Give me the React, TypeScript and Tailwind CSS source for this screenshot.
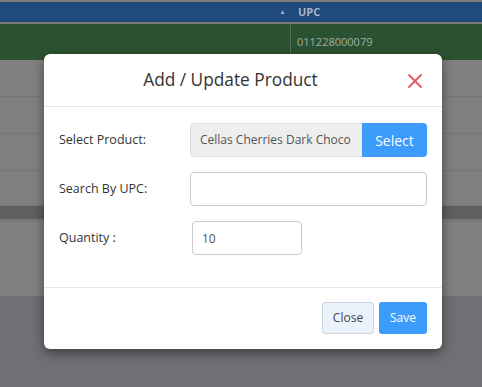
import React from "react";

const ROWS = [37, 37, 37, 35];

export default function App() {
  return (
    <div className="relative w-[482px] h-[387px] overflow-hidden bg-[#6f7074] font-['Open_Sans',sans-serif]">
      {/* table behind the backdrop */}
      <div className="h-[2px] bg-[#7d7d7d]" />
      <div className="flex h-[20px] bg-[#1e4a7c] text-[11px] font-bold text-[#a9b6c6]">
        <div className="flex w-[291px] items-center justify-end pr-[5px]">
          <span className="text-[7px] text-[#9aa8b8]">▲</span>
        </div>
        <div className="flex items-center pl-[7px]">UPC</div>
      </div>
      <div className="h-[2px] bg-[#7a7a7a]" />
      <div className="flex h-[36px] bg-[#2b5230] text-[11px] text-[#a3ada3]">
        <div className="w-[291px] border-r border-[#566f58]" />
        <div className="flex items-center pl-[6px]">011228000079</div>
      </div>
      <div className="bg-[#808080]">
        {ROWS.map((h, i) => (
          <div key={i} style={{ height: h }} className="border-b border-[#767676]" />
        ))}
      </div>
      <div className="h-[13px] bg-[#606060]" />
      <div className="h-[3px] bg-[#7a7a7a]" />
      <div className="h-[74px] bg-[#808080]" />

      {/* modal */}
      <div className="absolute left-[44px] top-[54px] flex w-[398px] h-[295px] flex-col rounded-[6px] bg-white shadow-[0_4px_12px_rgba(0,0,0,0.45)]">
        <div className="relative flex h-[53px] items-center justify-center border-b border-[#e5e5e5] pr-[25px]">
          <h4 className="text-[17.3px] text-[#333]">Add / Update Product</h4>
          <svg className="absolute right-[20px] top-[20px]" width="14" height="14" viewBox="0 0 14 14">
            <path d="M1 1 L13 13 M13 1 L1 13" stroke="#e0595c" strokeWidth="1.8" strokeLinecap="round" />
          </svg>
        </div>

        <div className="flex flex-1 flex-col gap-[15px] border-b border-[#e5e5e5] px-[15px] pt-[16px] text-[12.5px] text-[#333]">
          <div className="flex h-[34px] items-center">
            <label className="w-[131px]">Select Product:</label>
            <div className="flex h-[34px] flex-1 overflow-hidden rounded-[4px]">
              <div className="flex flex-1 items-center whitespace-nowrap rounded-l-[4px] border border-r-0 border-[#ddd] bg-[#eeeeee] pl-[9px] text-[12px] text-[#555]">
                Cellas Cherries Dark Choco
              </div>
              <button className="flex w-[65px] items-center justify-center bg-[#3c9cfc] text-[14px] text-white">
                Select
              </button>
            </div>
          </div>
          <div className="flex h-[34px] items-center">
            <label className="w-[131px]">Search By UPC:</label>
            <input className="h-[34px] flex-1 rounded-[4px] border border-[#ccc] bg-white px-[10px] outline-none" />
          </div>
          <div className="flex h-[34px] items-center">
            <label className="w-[133px]">Quantity :</label>
            <input
              defaultValue="10"
              className="h-[34px] w-[110px] rounded-[4px] border border-[#ccc] bg-white px-[9px] text-[12px] text-[#555] outline-none"
            />
          </div>
        </div>

        <div className="flex justify-end gap-[5px] px-[15px] pt-[14px] pb-[15px]">
          <button className="h-[32px] w-[52px] rounded-[3px] border border-[#ccd3dc] bg-[#eaf3fc] text-[12px] text-[#444]">
            Close
          </button>
          <button className="h-[32px] w-[48px] rounded-[3px] bg-[#3c9cfc] text-[12px] text-white">Save</button>
        </div>
      </div>
    </div>
  );
}
